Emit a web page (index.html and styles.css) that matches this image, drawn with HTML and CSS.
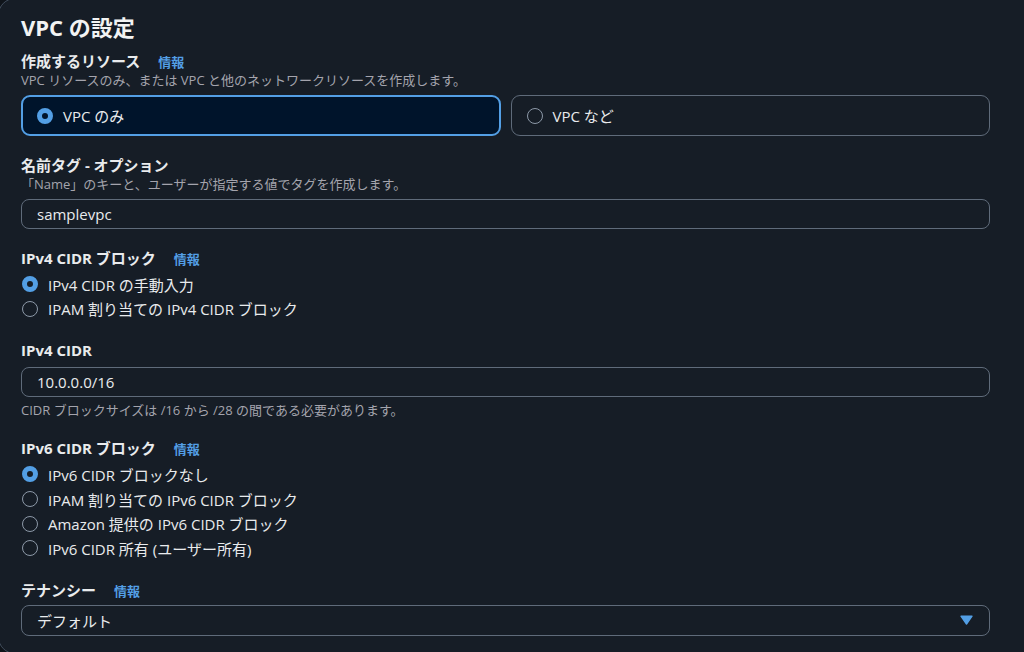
FILE: index.html
```html
<!DOCTYPE html>
<html lang="ja">
<head>
  <meta charset="UTF-8">
  <title>VPC の設定</title>
  <link rel="stylesheet" href="styles.css">
</head>
<body>
  <div class="panel">
    <h2 class="panel-title">VPC の設定</h2>

    <div class="fields">
      <div class="field">
        <div class="field-label">作成するリソース <a class="info">情報</a></div>
        <div class="field-desc">VPC リソースのみ、または VPC と他のネットワークリソースを作成します。</div>
        <div class="tiles">
          <div class="tile selected"><span class="radio on"></span>VPC のみ</div>
          <div class="tile"><span class="radio"></span>VPC など</div>
        </div>
      </div>

      <div class="field">
        <div class="field-label">名前タグ - オプション</div>
        <div class="field-desc">「Name」のキーと、ユーザーが指定する値でタグを作成します。</div>
        <div class="input">samplevpc</div>
      </div>

      <div class="field">
        <div class="field-label">IPv4 CIDR ブロック <a class="info">情報</a></div>
        <div class="radio-group">
          <div class="radio-row"><span class="radio on"></span>IPv4 CIDR の手動入力</div>
          <div class="radio-row"><span class="radio"></span>IPAM 割り当ての IPv4 CIDR ブロック</div>
        </div>
      </div>

      <div class="field">
        <div class="field-label">IPv4 CIDR</div>
        <div class="input spaced">10.0.0.0/16</div>
        <div class="field-hint">CIDR ブロックサイズは /16 から /28 の間である必要があります。</div>
      </div>

      <div class="field">
        <div class="field-label">IPv6 CIDR ブロック <a class="info">情報</a></div>
        <div class="radio-group">
          <div class="radio-row"><span class="radio on"></span>IPv6 CIDR ブロックなし</div>
          <div class="radio-row"><span class="radio"></span>IPAM 割り当ての IPv6 CIDR ブロック</div>
          <div class="radio-row"><span class="radio"></span>Amazon 提供の IPv6 CIDR ブロック</div>
          <div class="radio-row"><span class="radio"></span>IPv6 CIDR 所有 (ユーザー所有)</div>
        </div>
      </div>

      <div class="field">
        <div class="field-label">テナンシー <a class="info">情報</a></div>
        <div class="select">
          <span>デフォルト</span>
          <svg width="13" height="10" viewBox="0 0 13 10"><path d="M1 1.2 H12 L6.5 9 Z" fill="#539fe5" stroke="#539fe5" stroke-width="1.4" stroke-linejoin="round"/></svg>
        </div>
      </div>
    </div>
  </div>
</body>
</html>
```

FILE: styles.css
```css
html { background: #0f141a; }
body { margin: 0; overflow: hidden; font-family: "Open Sans", "Noto Sans CJK JP", sans-serif; color: #e9ebed; }

.panel { margin: -2px 0 0 -2px; width: 1010px; background: #161d26; border: 1px solid #414d5c; border-radius: 17px; padding: 13px 40px 17px 22px; }
.panel-title { margin: 0 0 9px; height: 30px; font-size: 22px; line-height: 30px; font-weight: 700; color: #f2f3f3; }

.fields { width: 969px; display: flex; flex-direction: column; gap: 19px; }
.field-label { height: 20px; font-size: 15px; line-height: 20px; font-weight: 700; white-space: nowrap; }
.info { margin-left: 14px; font-size: 13px; font-weight: 700; color: #539fe5; }
.field-desc { height: 18px; font-size: 13px; line-height: 18px; color: #a4a4ad; margin-bottom: 6px; }
.field-hint { height: 18px; font-size: 13px; line-height: 18px; color: #a4a4ad; margin-top: 4px; }

.tiles { display: grid; grid-template-columns: 1fr 1fr; gap: 10px; }
.tile { box-sizing: border-box; height: 41px; display: flex; align-items: center; gap: 10px; padding-left: 15px; border: 1px solid #5f6b7a; border-radius: 9px; font-size: 15px; }
.tile.selected { border: 2px solid #539fe5; background: #00142b; padding-left: 14px; }
.tile.selected .radio.on { background: #00142b; }

.radio { box-sizing: border-box; width: 16px; height: 16px; border-radius: 50%; border: 1.5px solid #8d99a8; flex: none; }
.radio.on { border: 5px solid #539fe5; background: #161d26; }

.radio-group { margin-top: 4px; }
.radio-row { height: 24.6px; display: flex; align-items: center; gap: 10px; padding-left: 1px; font-size: 15px; }

.input, .select { box-sizing: border-box; height: 30px; display: flex; align-items: center; padding: 0 15px; border: 1px solid #5f6b7a; border-radius: 8px; font-size: 15px; }
.input.spaced { margin-top: 7px; }
.select { height: 31px; margin-top: 5px; justify-content: space-between; padding-right: 16px; }
```
